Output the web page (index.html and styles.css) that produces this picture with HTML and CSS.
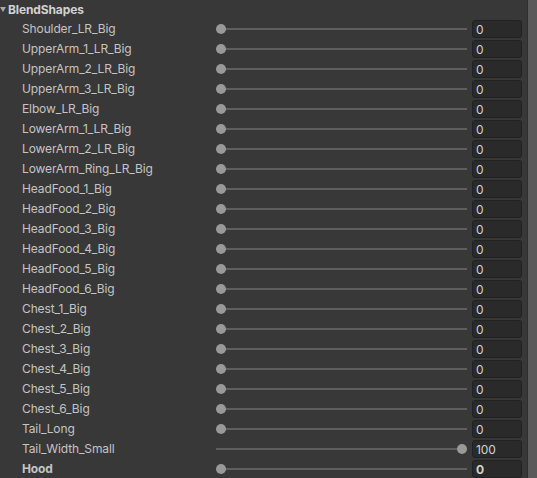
FILE: index.html
```html
<!DOCTYPE html>
<html lang="en">
<head>
    <meta charset="UTF-8">
    <title>BlendShapes</title>
    <link rel="stylesheet" href="styles.css">
</head>
<body>
    <div class="inspector">
        <div class="panel">
            <div class="foldout">
                <span class="arrow"></span>
                <span class="foldout-title">BlendShapes</span>
            </div>

            <div class="row"><span class="label">Shoulder_LR_Big</span><div class="slider" style="--v:0"><span class="knob"></span></div><div class="field">0</div></div>
            <div class="row"><span class="label">UpperArm_1_LR_Big</span><div class="slider" style="--v:0"><span class="knob"></span></div><div class="field">0</div></div>
            <div class="row"><span class="label">UpperArm_2_LR_Big</span><div class="slider" style="--v:0"><span class="knob"></span></div><div class="field">0</div></div>
            <div class="row"><span class="label">UpperArm_3_LR_Big</span><div class="slider" style="--v:0"><span class="knob"></span></div><div class="field">0</div></div>
            <div class="row"><span class="label">Elbow_LR_Big</span><div class="slider" style="--v:0"><span class="knob"></span></div><div class="field">0</div></div>
            <div class="row"><span class="label">LowerArm_1_LR_Big</span><div class="slider" style="--v:0"><span class="knob"></span></div><div class="field">0</div></div>
            <div class="row"><span class="label">LowerArm_2_LR_Big</span><div class="slider" style="--v:0"><span class="knob"></span></div><div class="field">0</div></div>
            <div class="row"><span class="label">LowerArm_Ring_LR_Big</span><div class="slider" style="--v:0"><span class="knob"></span></div><div class="field">0</div></div>
            <div class="row"><span class="label">HeadFood_1_Big</span><div class="slider" style="--v:0"><span class="knob"></span></div><div class="field">0</div></div>
            <div class="row"><span class="label">HeadFood_2_Big</span><div class="slider" style="--v:0"><span class="knob"></span></div><div class="field">0</div></div>
            <div class="row"><span class="label">HeadFood_3_Big</span><div class="slider" style="--v:0"><span class="knob"></span></div><div class="field">0</div></div>
            <div class="row"><span class="label">HeadFood_4_Big</span><div class="slider" style="--v:0"><span class="knob"></span></div><div class="field">0</div></div>
            <div class="row"><span class="label">HeadFood_5_Big</span><div class="slider" style="--v:0"><span class="knob"></span></div><div class="field">0</div></div>
            <div class="row"><span class="label">HeadFood_6_Big</span><div class="slider" style="--v:0"><span class="knob"></span></div><div class="field">0</div></div>
            <div class="row"><span class="label">Chest_1_Big</span><div class="slider" style="--v:0"><span class="knob"></span></div><div class="field">0</div></div>
            <div class="row"><span class="label">Chest_2_Big</span><div class="slider" style="--v:0"><span class="knob"></span></div><div class="field">0</div></div>
            <div class="row"><span class="label">Chest_3_Big</span><div class="slider" style="--v:0"><span class="knob"></span></div><div class="field">0</div></div>
            <div class="row"><span class="label">Chest_4_Big</span><div class="slider" style="--v:0"><span class="knob"></span></div><div class="field">0</div></div>
            <div class="row"><span class="label">Chest_5_Big</span><div class="slider" style="--v:0"><span class="knob"></span></div><div class="field">0</div></div>
            <div class="row"><span class="label">Chest_6_Big</span><div class="slider" style="--v:0"><span class="knob"></span></div><div class="field">0</div></div>
            <div class="row"><span class="label">Tail_Long</span><div class="slider" style="--v:0"><span class="knob"></span></div><div class="field">0</div></div>
            <div class="row"><span class="label">Tail_Width_Small</span><div class="slider" style="--v:100"><span class="knob"></span></div><div class="field">100</div></div>
            <div class="row modified"><span class="label">Hood</span><div class="slider" style="--v:0"><span class="knob"></span></div><div class="field">0</div></div>
        </div>
        <div class="scrollbar"></div>
    </div>
</body>
</html>
```

FILE: styles.css
```css
body {
    margin: 0;
    background-color: #383838;
    font-family: Inter, "Noto Sans", sans-serif;
    font-size: 12px;
    letter-spacing: -0.12px;
    color: #c4c4c4;
}

.inspector {
    display: flex;
    height: 478px;
    overflow: hidden;
}

.panel {
    width: 527px;
    flex-shrink: 0;
}

.scrollbar {
    flex: 1;
    border-left: 1px solid #2e2e2e;
    background-color: #5a5a5a;
}

/* foldout header */
.foldout {
    display: flex;
    align-items: center;
    height: 18px;
}

.arrow {
    width: 0;
    height: 0;
    margin-right: 2px;
    border-left: 3px solid transparent;
    border-right: 3px solid transparent;
    border-top: 5px solid #a8a8a8;
}

.foldout-title {
    font-weight: bold;
    color: #d2d2d2;
}

/* property rows */
.row {
    display: grid;
    grid-template-columns: 194px 1fr 50px;
    align-items: center;
    height: 20px;
    padding: 0 5px 0 22px;
}

.label {
    white-space: nowrap;
    line-height: 20px;
    padding-top: 1px;
}

.slider {
    position: relative;
    height: 20px;
    margin-right: 5px;
}

.slider::before {
    content: "";
    position: absolute;
    left: 0;
    right: 0;
    top: 9px;
    height: 2px;
    background-color: #5e5e5e;
}

.knob {
    position: absolute;
    top: 5px;
    left: calc(var(--v) * 2.41px);
    width: 10px;
    height: 10px;
    border-radius: 50%;
    background-color: #999999;
}

.field {
    height: 16px;
    line-height: 16px;
    padding-left: 3px;
    padding-top: 1px;
    box-sizing: content-box;
    height: 15px;
    background-color: #2a2a2a;
    border: 1px solid #212121;
    border-radius: 3px;
    color: #d2d2d2;
}

.modified .label,
.modified .field {
    font-weight: bold;
}
```
